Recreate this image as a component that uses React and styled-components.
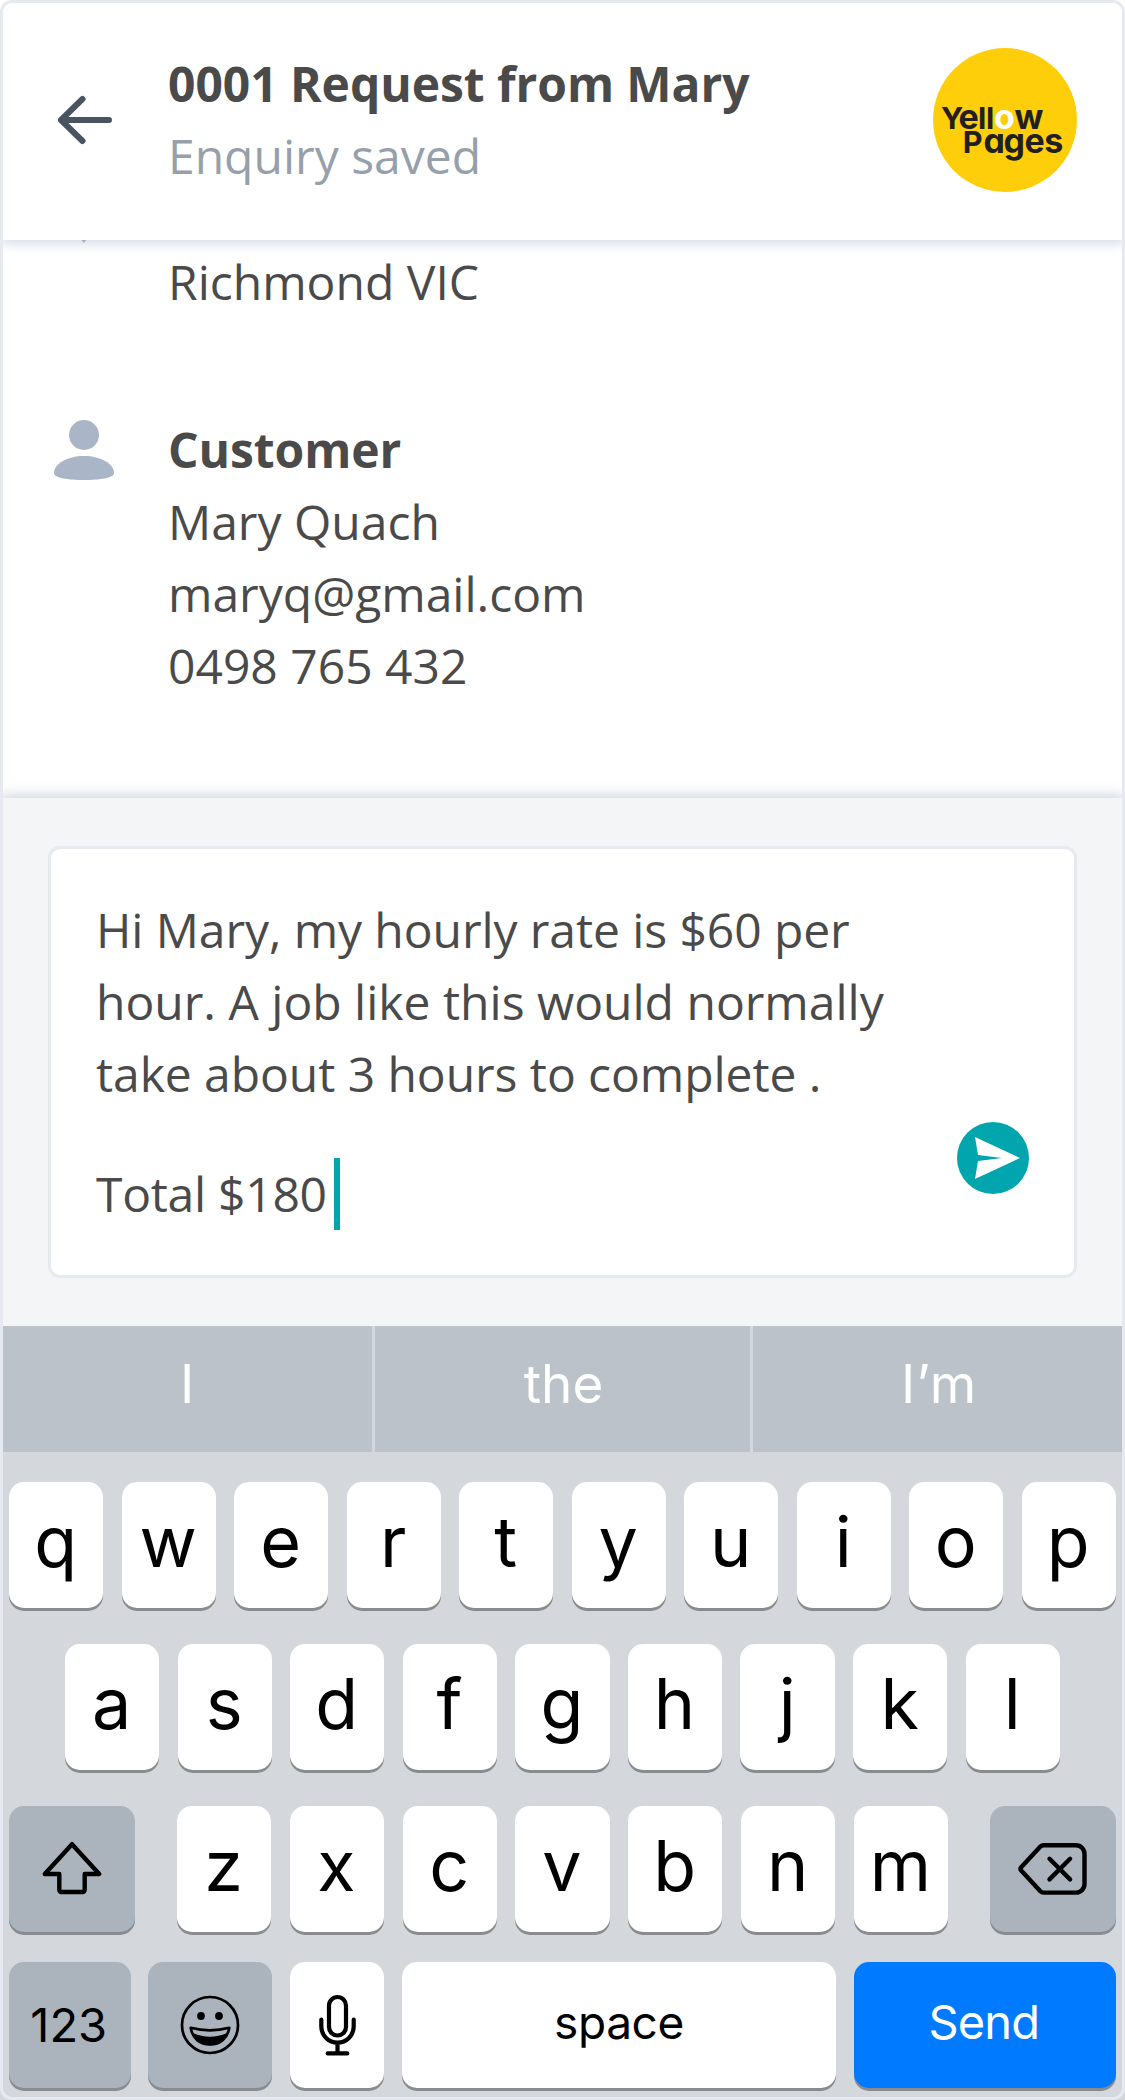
import React from "react";
import styled, { createGlobalStyle } from "styled-components";

const GlobalStyle = createGlobalStyle`
  *, *::before, *::after { box-sizing: border-box; }
  body { margin: 0; background: #fff; }
  button { border: 0; padding: 0; margin: 0; background: none; font: inherit; color: inherit; }
  p { margin: 0; }
  svg { display: block; flex: none; }
`;

const Phone = styled.div`
  position: relative;
  display: flex;
  flex-direction: column;
  width: 1125px;
  height: 2100px;
  overflow: hidden;
  background: #fff;
  color: #4a4a4a;
  font-family: "Open Sans", "Noto Sans", sans-serif;
  font-size: 48px;
  line-height: 72px;

  &::after {
    content: "";
    position: absolute;
    inset: 0;
    z-index: 3;
    border: 3px solid #e6eaf0;
    border-radius: 12px;
    pointer-events: none;
  }
`;

const Header = styled.header`
  display: flex;
  align-items: center;
  height: 240px;
  flex: none;
  padding: 0 48px 0 54px;
  background: #fff;
  box-shadow: 0 3px 12px rgba(150, 165, 190, 0.45);
  z-index: 2;
`;

const BackButton = styled.button`
  width: 60px;
  height: 60px;
  margin-right: 54px;
`;

const Heading = styled.div`
  flex: 1;
  white-space: nowrap;
`;

const Title = styled.h1`
  margin: 0;
  font-size: 48px;
  font-weight: 700;
  line-height: 72px;
  letter-spacing: -0.06px;
`;

const Status = styled.p`
  color: #96a0aa;
`;

const Details = styled.main`
  flex: 1;
  min-height: 0;
  padding: 6px 54px 0;
`;

const DetailRow = styled.section`
  display: flex;
  gap: 54px;
  margin-bottom: 96px;
`;

const IconSlot = styled.div`
  width: 60px;
  flex: none;
  margin-top: ${(p) => p.$shift}px;
`;

const Composer = styled.section`
  flex: none;
  height: 528px;
  padding: 48px;
  background: #f3f5f7;
  box-shadow: 0 -3px 12px rgba(150, 165, 190, 0.45);
  z-index: 1;
`;

const MessageBox = styled.div`
  display: flex;
  align-items: flex-end;
  justify-content: space-between;
  height: 432px;
  padding: 45px;
  border: 3px solid #e6e9ef;
  border-radius: 12px;
  background: #fff;
`;

const Message = styled.div`
  display: flex;
  flex-direction: column;
  white-space: pre;
`;

const Line = styled.p`
  display: flex;
  letter-spacing: ${(p) => p.$spacing || 0}px;
  margin-top: ${(p) => p.$above || 0}px;
`;

const Caret = styled.span`
  width: 6px;
  height: 72px;
  margin-left: 7px;
  background: #00a5ad;
`;

const SendButton = styled.button`
  width: 72px;
  height: 72px;
  margin-bottom: 36px;
`;

const Keyboard = styled.section`
  flex: none;
  height: 774px;
  background: #d4d7dc;
  color: #000;
  font-family: Inter, "Liberation Sans", sans-serif;
  z-index: 1;
`;

const Suggestions = styled.div`
  display: grid;
  grid-template-columns: 372px 375px 372px;
  gap: 3px;
  height: 126px;
`;

const Suggestion = styled.button`
  background: #bbc2ca;
  color: #fff;
  font-size: 53px;
  line-height: 116px;
  letter-spacing: ${(p) => p.$spacing || 0}px;
  padding: 0 0 10px ${(p) => p.$nudge ?? 2}px;
`;

const Keys = styled.div`
  padding: 30px 9px 0;
`;

const KeyRow = styled.div`
  display: flex;
  justify-content: space-between;
  padding: 0 ${(p) => p.$inset || 0}px;
  margin-bottom: ${(p) => p.$below || 36}px;
`;

const LetterGroup = styled.div`
  display: flex;
  justify-content: space-between;
  width: 771px;
`;

const Key = styled.button`
  display: flex;
  align-items: center;
  justify-content: center;
  width: ${(p) => p.$width || 94.3}px;
  height: 126px;
  border-radius: 15px;
  background: ${(p) => p.$fill || "#fff"};
  color: ${(p) => p.$ink || "#000"};
  box-shadow: 0 3px 0 #898b8f;
  font-size: ${(p) => p.$size || 70}px;
  letter-spacing: ${(p) => p.$spacing || 0}px;
  line-height: 1;
  padding: 0 ${(p) => p.$nudge || 0}px ${(p) => p.$lift || 0}px 0;
`;

const LogoText = styled.text`
  font-family: Inter, sans-serif;
  font-size: 34px;
  font-weight: 700;
  font-feature-settings: "cv11";
  fill: #221f1f;
`;

const LogoTall = styled.tspan`
  font-size: 30.5px;
`;

const LogoRing = styled.tspan`
  fill: #fff;
`;

const GREY = "#abb3bd";

const BackArrow = () => (
  <svg width="60" height="60" viewBox="0 0 60 60" fill="none" stroke="#4a5460" strokeWidth="6" strokeLinecap="round" strokeLinejoin="round">
    <path d="M28.500 9 7 30l21.500 21M7 30h48" />
  </svg>
);

const Pin = () => (
  <svg width="60" height="60" viewBox="0 0 60 60" fill="#aab5c8">
    <path d="M30 0a21 21 0 0 0-21 21c0 15 14 30 21 39 7-9 21-24 21-39A21 21 0 0 0 30 0z" />
  </svg>
);

const Person = () => (
  <svg width="60" height="60" viewBox="0 0 60 60" fill="#aab5c8">
    <circle cx="30" cy="15" r="15" />
    <path d="M30 36c17 0 30 8 30 17 0 5-14 7-30 7S0 58 0 53c0-9 13-17 30-17z" />
  </svg>
);

const YellowPages = () => (
  <svg width="144" height="144" viewBox="0 0 144 144">
    <circle cx="72" cy="72" r="72" fill="#ffce0a" />
    <LogoText x="8 25.500 45 53 61 81.500" y="81.300">
      <LogoTall>Y</LogoTall>e<LogoTall>ll</LogoTall><LogoRing>o</LogoRing>w
    </LogoText>
    <LogoText x="29.700 50.500 70.500 91.500 111.300" y="105.300">
      <LogoTall>P</LogoTall>ages
    </LogoText>
  </svg>
);

const SendIcon = () => (
  <svg width="72" height="72" viewBox="0 0 72 72">
    <circle cx="36" cy="36" r="36" fill="#00a5ad" />
    <path fill="#fff" d="M18 15 63 36 18 57l3-18 24-3-24-3z" />
  </svg>
);

const ShiftIcon = () => (
  <svg width="60" height="56" viewBox="0 0 60 56" fill="none" stroke="#000" strokeWidth="4.400" strokeLinejoin="round">
    <path d="M30 3.200 57.200 33H42.700V48.800a2.200 2.200 0 0 1-2.200 2.200h-21a2.200 2.200 0 0 1-2.200-2.200V33H2.800z" />
  </svg>
);

const BackspaceIcon = () => (
  <svg width="72" height="54" viewBox="0 0 72 54" fill="none" stroke="#000" strokeWidth="4.400" strokeLinecap="round" strokeLinejoin="round">
    <path d="M4.200 25.200 23.400 4.600q1.300-1.400 3.200-1.400H59a8.500 8.500 0 0 1 8.500 8.500v30.400a8.500 8.500 0 0 1-8.500 8.500H26.600q-1.900 0-3.200-1.400L4.200 28.600q-1.500-1.700 0-3.400z" />
    <path d="m32.500 16.800 20.600 20.600M53.100 16.800 32.500 37.400" />
  </svg>
);

const SmileIcon = () => (
  <svg width="60" height="60" viewBox="0 0 60 60" fill="none" stroke="#000" strokeWidth="2.700">
    <circle cx="30" cy="30" r="28" />
    <g fill="#000" stroke="none">
      <circle cx="21" cy="21" r="3.900" />
      <circle cx="39" cy="21" r="3.900" />
      <path d="M13 38q17 7.500 34 0-4 12.200-17 12.200T13 38z" />
    </g>
    <path strokeLinejoin="round" d="M10.700 32.800q19.300 5 38.600 0C47.500 43.500 40 49.500 30 49.500s-17.500-6-19.300-16.700z" />
  </svg>
);

const MicIcon = () => (
  <svg width="39" height="64" viewBox="0 0 39 64" fill="none" stroke="#000" strokeWidth="4.200" strokeLinecap="round">
    <rect x="11" y="4" width="17" height="38.500" rx="8.500" />
    <path d="M3.300 26.700v6.800a16.200 16.200 0 0 0 32.400 0v-6.800M19.500 50v10M9.700 60.400h19.600" />
  </svg>
);

const letters = (row) =>
  [...row].map((c) => (
    <Key key={c} $lift={6} $nudge={1}>
      {c}
    </Key>
  ));

export default function App() {
  return (
    <Phone>
      <GlobalStyle />
      <Header>
        <BackButton aria-label="Back"><BackArrow /></BackButton>
        <Heading>
          <Title>0001 Request from Mary</Title>
          <Status>Enquiry saved</Status>
        </Heading>
        <YellowPages />
      </Header>

      <Details>
        <DetailRow>
          <IconSlot $shift={-63}><Pin /></IconSlot>
          <p>Richmond VIC</p>
        </DetailRow>
        <DetailRow>
          <IconSlot $shift={6}><Person /></IconSlot>
          <div>
            <Title as="h2">Customer</Title>
            <p>Mary Quach</p>
            <p>maryq@gmail.com</p>
            <p>0498 765 432</p>
          </div>
        </DetailRow>
      </Details>

      <Composer>
        <MessageBox>
          <Message>
            <Line $spacing={-0.08}>Hi Mary, my hourly rate is $60 per</Line>
            <Line>hour. A job like this would normally</Line>
            <Line $spacing={-0.06}>take about 3 hours to complete .</Line>
            <Line $spacing={-0.27} $above={48}>Total $180<Caret /></Line>
          </Message>
          <SendButton aria-label="Send message"><SendIcon /></SendButton>
        </MessageBox>
      </Composer>

      <Keyboard>
        <Suggestions>
          <Suggestion>I</Suggestion>
          <Suggestion>the</Suggestion>
          <Suggestion $spacing={0.8} $nudge={0}>I’m</Suggestion>
        </Suggestions>
        <Keys>
          <KeyRow>{letters("qwertyuiop")}</KeyRow>
          <KeyRow $inset={56}>{letters("asdfghjkl")}</KeyRow>
          <KeyRow $below={30}>
            <Key $width={126} $fill={GREY} aria-label="Shift"><ShiftIcon /></Key>
            <LetterGroup>{letters("zxcvbnm")}</LetterGroup>
            <Key $width={126} $fill={GREY} aria-label="Delete"><BackspaceIcon /></Key>
          </KeyRow>
          <KeyRow $below={0.1}>
            <Key $width={121.5} $fill={GREY} $size={47} $lift={1} $nudge={2}>123</Key>
            <Key $width={123.7} $fill={GREY} $nudge={1} $lift={1} aria-label="Emoji"><SmileIcon /></Key>
            <Key aria-label="Dictate"><MicIcon /></Key>
            <Key $width={433.3} $size={46} $spacing={-0.4} $lift={6}>space</Key>
            <Key $width={262.4} $fill="#007aff" $ink="#fff" $size={47} $spacing={-0.9} $lift={7} $nudge={2}>Send</Key>
          </KeyRow>
        </Keys>
      </Keyboard>
    </Phone>
  );
}
